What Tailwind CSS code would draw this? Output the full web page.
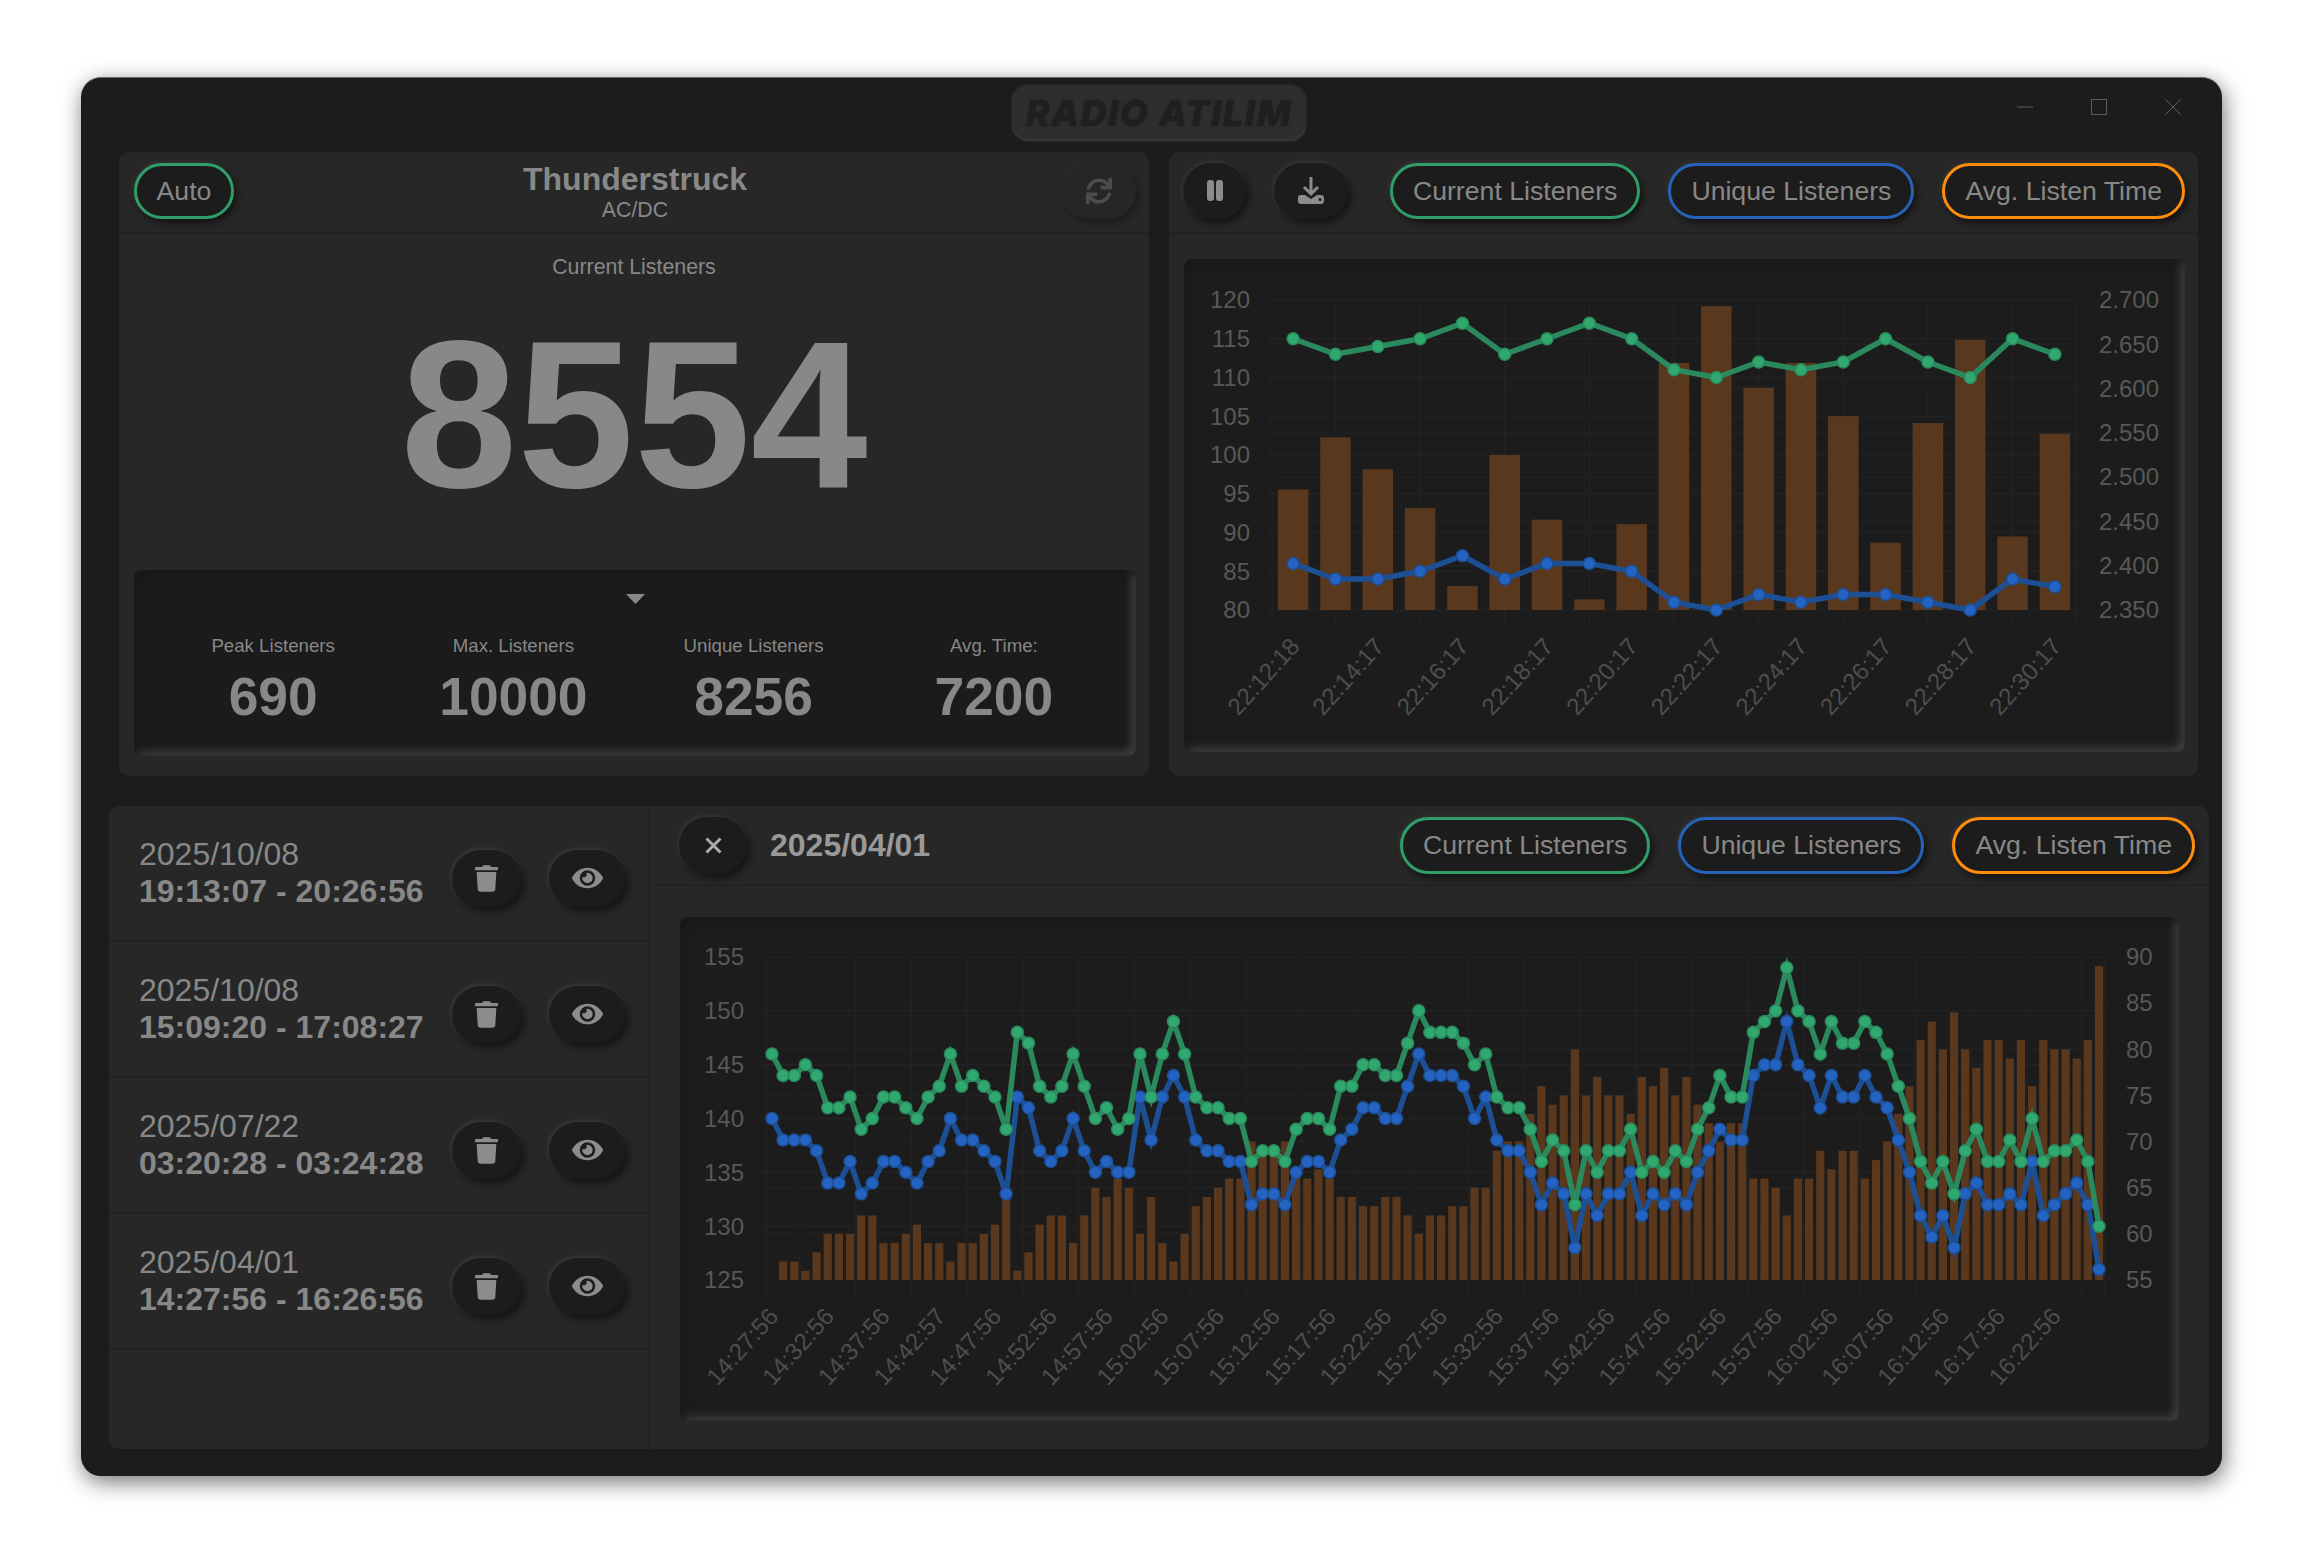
<!DOCTYPE html>
<html lang="en">
<head>
  <meta charset="UTF-8" />
  <title>Radio Atilim</title>
  <script src="https://cdn.jsdelivr.net/npm/@tailwindcss/browser@4"></script>
</head>
<body class="bg-white h-screen overflow-hidden text-[#888] [font-family:'Liberation_Sans',Arial,sans-serif]">
  <!-- Window -->
  <div class="ml-[81px] mt-[77px] w-[2141px] h-[1399px] flex flex-col bg-[#1c1c1c] rounded-[20px] border-t border-[#666] shadow-[2px_6px_22px_rgba(0,0,0,0.55)]">

    <!-- Title bar -->
    <div class="h-[74px] shrink-0 flex items-start pl-[931px] pr-[41px]">
      <div class="w-[294px] h-[56px] mt-[7px] flex items-center justify-center rounded-[16px] bg-[#2e2e2e] text-[#1f1f1f] text-[36px] font-extrabold italic tracking-[1.6px] [font-family:Inter,sans-serif] [text-shadow:0_0_2px_#1f1f1f] shadow-[inset_0_-2px_3px_#383838,0_0_3px_#333]">RADIO ATILIM</div>
      <div class="ml-auto mt-[21px] flex items-center gap-[58px] text-[#5c5c5c]">
        <svg width="16" height="16" viewBox="0 0 16 16"><path d="M0 8h16" stroke="currentColor" stroke-width="1"/></svg>
        <svg width="16" height="16" viewBox="0 0 16 16"><rect x="0.5" y="0.5" width="15" height="15" fill="none" stroke="currentColor"/></svg>
        <svg width="16" height="16" viewBox="0 0 16 16"><path d="M0 0l16 16M16 0L0 16" stroke="currentColor"/></svg>
      </div>
    </div>

    <!-- Live row -->
    <div class="h-[624px] shrink-0 flex gap-[20px] pl-[38px] pr-[24px]">
      <!-- Now playing -->
      <section class="w-[1030px] flex flex-col bg-[#272727] rounded-[10px]">
        <div class="h-[82px] shrink-0 grid grid-cols-[1fr_auto_1fr] items-center pl-[15px] pr-[13px] pb-[3px] border-b-2 border-[#222]">
          <button class="justify-self-start w-[100px] h-[56px] rounded-full bg-[#1c1c1c] border-[3px] border-[#2f9e68] text-[26.67px] shadow-[3px_4px_7px_rgba(0,0,0,0.55),-1px_-1px_4px_rgba(255,255,255,0.08)]">Auto</button>
          <div class="text-center mt-[1px]">
            <div class="text-[32px] leading-[37px] font-bold">Thunderstruck</div>
            <div class="text-[21.33px] leading-[24px]">AC/DC</div>
          </div>
          <button class="justify-self-end w-[75px] h-[56px] rounded-full bg-[#262626] flex items-center justify-center shadow-[3px_4px_7px_rgba(0,0,0,0.3),-1px_-1px_4px_rgba(255,255,255,0.03)]">
            <svg width="26" height="26" viewBox="0 0 512 512" fill="#4c4c4c"><path d="M440.65 12.57l4 82.77A247.16 247.16 0 0 0 255.83 8C134.73 8 33.91 94.92 12.29 209.82A12 12 0 0 0 24.09 224h49.05a12 12 0 0 0 11.67-9.26 175.91 175.91 0 0 1 317-56.94l-101.46-4.86a12 12 0 0 0-12.57 12v47.41a12 12 0 0 0 12 12H500a12 12 0 0 0 12-12V12a12 12 0 0 0-12-12h-47.37a12 12 0 0 0-11.98 12.57zM255.83 432a175.61 175.61 0 0 1-146-77.8l101.8 4.87a12 12 0 0 0 12.57-12v-47.4a12 12 0 0 0-12-12H12a12 12 0 0 0-12 12V500a12 12 0 0 0 12 12h47.35a12 12 0 0 0 12-12.6l-4.15-82.57A247.17 247.17 0 0 0 255.83 504c121.11 0 221.93-86.92 243.55-201.82a12 12 0 0 0-11.8-14.18h-49.05a12 12 0 0 0-11.67 9.26A175.86 175.86 0 0 1 255.83 432z"/></svg>
          </button>
        </div>
        <div class="pt-[21px] text-center text-[21.33px] leading-[25px]">Current Listeners</div>
        <div class="h-[240px] mt-[15px] flex items-center justify-center text-[210px] leading-none font-bold">8554</div>
        <div class="mt-[35px] ml-[15px] mr-[13px] h-[186px] flex flex-col bg-[#1b1b1b] rounded-[8px] shadow-[inset_3px_3px_8px_#161616,inset_-4px_-4px_8px_#454545]">
          <svg class="mx-auto mt-[24px]" width="19" height="10" viewBox="0 0 19 10"><path d="M0 0h19L9.5 10z" fill="#888"/></svg>
          <div class="mt-[31px] pl-[19px] pr-[22px] grid grid-cols-4 text-center">
            <div><div class="text-[18.67px] leading-[22px]">Peak Listeners</div><div class="mt-[10px] text-[53.33px] leading-[60px] font-bold">690</div></div>
            <div><div class="text-[18.67px] leading-[22px]">Max. Listeners</div><div class="mt-[10px] text-[53.33px] leading-[60px] font-bold">10000</div></div>
            <div><div class="text-[18.67px] leading-[22px]">Unique Listeners</div><div class="mt-[10px] text-[53.33px] leading-[60px] font-bold">8256</div></div>
            <div><div class="text-[18.67px] leading-[22px]">Avg. Time:</div><div class="mt-[10px] text-[53.33px] leading-[60px] font-bold">7200</div></div>
          </div>
        </div>
      </section>

      <!-- Live chart -->
      <section class="flex-1 flex flex-col bg-[#272727] rounded-[10px]">
        <div class="h-[82px] shrink-0 flex items-center pl-[14px] pr-[13px] pb-[3px] border-b-2 border-[#222]">
          <button class="w-[63px] h-[56px] rounded-full bg-[#1c1c1c] flex items-center justify-center gap-[2px] shadow-[3px_4px_7px_rgba(0,0,0,0.55),-1px_-1px_5px_rgba(255,255,255,0.1)]">
            <span class="w-[7px] h-[21px] rounded-[3px] bg-[#8c8c8c]"></span><span class="w-[7px] h-[21px] rounded-[3px] bg-[#8c8c8c]"></span>
          </button>
          <button class="ml-[28px] w-[74px] h-[56px] rounded-full bg-[#1c1c1c] flex items-center justify-center shadow-[3px_4px_7px_rgba(0,0,0,0.55),-1px_-1px_5px_rgba(255,255,255,0.1)]">
            <svg width="26" height="27" viewBox="0 0 26 27"><path d="M13 0v16M6 10l7 7 7-7" fill="none" stroke="#8c8c8c" stroke-width="3"/><path d="M3 18h4l6 4 6-4h4a3 3 0 0 1 3 3v3a3 3 0 0 1-3 3H3a3 3 0 0 1-3-3v-3a3 3 0 0 1 3-3z" fill="#8c8c8c"/><circle cx="22" cy="22.5" r="1.5" fill="#1c1c1c"/></svg>
          </button>
          <div class="ml-auto flex gap-[28px]">
            <button class="h-[56px] px-[20px] rounded-full bg-[#1c1c1c] border-[3px] border-[#2f9e68] text-[26.67px] shadow-[3px_4px_7px_rgba(0,0,0,0.55),-1px_-1px_4px_rgba(255,255,255,0.08)]">Current Listeners</button>
            <button class="h-[56px] px-[20px] rounded-full bg-[#1c1c1c] border-[3px] border-[#2563b8] text-[26.67px] shadow-[3px_4px_7px_rgba(0,0,0,0.55),-1px_-1px_4px_rgba(255,255,255,0.08)]">Unique Listeners</button>
            <button class="h-[56px] px-[20px] rounded-full bg-[#1c1c1c] border-[3px] border-[#ff8c0a] text-[26.67px] shadow-[3px_4px_7px_rgba(0,0,0,0.55),-1px_-1px_4px_rgba(255,255,255,0.08)]">Avg. Listen Time</button>
          </div>
        </div>
        <div class="mt-[25px] ml-[15px] mr-[13px] h-[493px] bg-[#1c1c1c] rounded-[8px] shadow-[inset_3px_3px_8px_#161616,inset_-4px_-4px_8px_#454545]">
          <svg id="liveChart" class="block" width="1000" height="491" viewBox="1184 259 1000 491"></svg>
        </div>
      </section>
    </div>

    <!-- History row -->
    <div class="mt-[30px] h-[643px] shrink-0 ml-[28px] mr-[13px] flex bg-[#272727] rounded-[10px]">
      <div id="sessions" class="w-[541px] shrink-0 border-r-2 border-[#222]">
        <div class="h-[136px] flex items-center pl-[30px] pr-[23px] border-b-2 border-[#222]">
          <div class="flex-1 text-[32px] leading-[37px]"><div>2025/10/08</div><div class="font-bold">19:13:07 - 20:26:56</div></div>
          <button class="mt-[10px] w-[69px] h-[57px] rounded-full bg-[#1c1c1c] flex items-center justify-center shadow-[3px_4px_7px_rgba(0,0,0,0.55),-1px_-1px_5px_rgba(255,255,255,0.12)]">
            <svg width="23" height="27" viewBox="0 0 448 512" fill="#8c8c8c"><path d="M432 32H312l-9.4-18.7A24 24 0 0 0 281.1 0H166.8a23.72 23.72 0 0 0-21.4 13.3L136 32H16A16 16 0 0 0 0 48v32a16 16 0 0 0 16 16h416a16 16 0 0 0 16-16V48a16 16 0 0 0-16-16zM53.2 467a48 48 0 0 0 47.9 45h245.8a48 48 0 0 0 47.9-45L416 128H32z"/></svg>
          </button>
          <button class="mt-[10px] ml-[28px] w-[76px] h-[57px] rounded-full bg-[#1c1c1c] flex items-center justify-center shadow-[3px_4px_7px_rgba(0,0,0,0.55),-1px_-1px_5px_rgba(255,255,255,0.12)]">
            <svg width="31" height="28" viewBox="0 0 576 512" fill="#8c8c8c"><path d="M572.52 241.4C518.29 135.59 410.93 64 288 64S57.68 135.64 3.48 241.41a32.35 32.35 0 0 0 0 29.19C57.71 376.41 165.07 448 288 448s230.32-71.64 284.52-177.41a32.35 32.35 0 0 0 0-29.19zM288 400a144 144 0 1 1 144-144 143.93 143.93 0 0 1-144 144zm0-240a95.31 95.31 0 0 0-25.31 3.79 47.85 47.85 0 0 1-66.9 66.9A95.78 95.78 0 1 0 288 160z"/></svg>
          </button>
        </div>
        <div class="h-[136px] flex items-center pl-[30px] pr-[23px] border-b-2 border-[#222]">
          <div class="flex-1 text-[32px] leading-[37px]"><div>2025/10/08</div><div class="font-bold">15:09:20 - 17:08:27</div></div>
          <button class="mt-[10px] w-[69px] h-[57px] rounded-full bg-[#1c1c1c] flex items-center justify-center shadow-[3px_4px_7px_rgba(0,0,0,0.55),-1px_-1px_5px_rgba(255,255,255,0.12)]">
            <svg width="23" height="27" viewBox="0 0 448 512" fill="#8c8c8c"><path d="M432 32H312l-9.4-18.7A24 24 0 0 0 281.1 0H166.8a23.72 23.72 0 0 0-21.4 13.3L136 32H16A16 16 0 0 0 0 48v32a16 16 0 0 0 16 16h416a16 16 0 0 0 16-16V48a16 16 0 0 0-16-16zM53.2 467a48 48 0 0 0 47.9 45h245.8a48 48 0 0 0 47.9-45L416 128H32z"/></svg>
          </button>
          <button class="mt-[10px] ml-[28px] w-[76px] h-[57px] rounded-full bg-[#1c1c1c] flex items-center justify-center shadow-[3px_4px_7px_rgba(0,0,0,0.55),-1px_-1px_5px_rgba(255,255,255,0.12)]">
            <svg width="31" height="28" viewBox="0 0 576 512" fill="#8c8c8c"><path d="M572.52 241.4C518.29 135.59 410.93 64 288 64S57.68 135.64 3.48 241.41a32.35 32.35 0 0 0 0 29.19C57.71 376.41 165.07 448 288 448s230.32-71.64 284.52-177.41a32.35 32.35 0 0 0 0-29.19zM288 400a144 144 0 1 1 144-144 143.93 143.93 0 0 1-144 144zm0-240a95.31 95.31 0 0 0-25.31 3.79 47.85 47.85 0 0 1-66.9 66.9A95.78 95.78 0 1 0 288 160z"/></svg>
          </button>
        </div>
        <div class="h-[136px] flex items-center pl-[30px] pr-[23px] border-b-2 border-[#222]">
          <div class="flex-1 text-[32px] leading-[37px]"><div>2025/07/22</div><div class="font-bold">03:20:28 - 03:24:28</div></div>
          <button class="mt-[10px] w-[69px] h-[57px] rounded-full bg-[#1c1c1c] flex items-center justify-center shadow-[3px_4px_7px_rgba(0,0,0,0.55),-1px_-1px_5px_rgba(255,255,255,0.12)]">
            <svg width="23" height="27" viewBox="0 0 448 512" fill="#8c8c8c"><path d="M432 32H312l-9.4-18.7A24 24 0 0 0 281.1 0H166.8a23.72 23.72 0 0 0-21.4 13.3L136 32H16A16 16 0 0 0 0 48v32a16 16 0 0 0 16 16h416a16 16 0 0 0 16-16V48a16 16 0 0 0-16-16zM53.2 467a48 48 0 0 0 47.9 45h245.8a48 48 0 0 0 47.9-45L416 128H32z"/></svg>
          </button>
          <button class="mt-[10px] ml-[28px] w-[76px] h-[57px] rounded-full bg-[#1c1c1c] flex items-center justify-center shadow-[3px_4px_7px_rgba(0,0,0,0.55),-1px_-1px_5px_rgba(255,255,255,0.12)]">
            <svg width="31" height="28" viewBox="0 0 576 512" fill="#8c8c8c"><path d="M572.52 241.4C518.29 135.59 410.93 64 288 64S57.68 135.64 3.48 241.41a32.35 32.35 0 0 0 0 29.19C57.71 376.41 165.07 448 288 448s230.32-71.64 284.52-177.41a32.35 32.35 0 0 0 0-29.19zM288 400a144 144 0 1 1 144-144 143.93 143.93 0 0 1-144 144zm0-240a95.31 95.31 0 0 0-25.31 3.79 47.85 47.85 0 0 1-66.9 66.9A95.78 95.78 0 1 0 288 160z"/></svg>
          </button>
        </div>
        <div class="h-[136px] flex items-center pl-[30px] pr-[23px] border-b-2 border-[#222]">
          <div class="flex-1 text-[32px] leading-[37px]"><div>2025/04/01</div><div class="font-bold">14:27:56 - 16:26:56</div></div>
          <button class="mt-[10px] w-[69px] h-[57px] rounded-full bg-[#1c1c1c] flex items-center justify-center shadow-[3px_4px_7px_rgba(0,0,0,0.55),-1px_-1px_5px_rgba(255,255,255,0.12)]">
            <svg width="23" height="27" viewBox="0 0 448 512" fill="#8c8c8c"><path d="M432 32H312l-9.4-18.7A24 24 0 0 0 281.1 0H166.8a23.72 23.72 0 0 0-21.4 13.3L136 32H16A16 16 0 0 0 0 48v32a16 16 0 0 0 16 16h416a16 16 0 0 0 16-16V48a16 16 0 0 0-16-16zM53.2 467a48 48 0 0 0 47.9 45h245.8a48 48 0 0 0 47.9-45L416 128H32z"/></svg>
          </button>
          <button class="mt-[10px] ml-[28px] w-[76px] h-[57px] rounded-full bg-[#1c1c1c] flex items-center justify-center shadow-[3px_4px_7px_rgba(0,0,0,0.55),-1px_-1px_5px_rgba(255,255,255,0.12)]">
            <svg width="31" height="28" viewBox="0 0 576 512" fill="#8c8c8c"><path d="M572.52 241.4C518.29 135.59 410.93 64 288 64S57.68 135.64 3.48 241.41a32.35 32.35 0 0 0 0 29.19C57.71 376.41 165.07 448 288 448s230.32-71.64 284.52-177.41a32.35 32.35 0 0 0 0-29.19zM288 400a144 144 0 1 1 144-144 143.93 143.93 0 0 1-144 144zm0-240a95.31 95.31 0 0 0-25.31 3.79 47.85 47.85 0 0 1-66.9 66.9A95.78 95.78 0 1 0 288 160z"/></svg>
          </button>
        </div>
      </div>

      <div class="flex-1 flex flex-col">
        <div class="h-[80px] shrink-0 flex items-center pl-[29px] pr-[14px] border-b-2 border-[#222]">
          <button class="w-[68px] h-[57px] rounded-full bg-[#1c1c1c] flex items-center justify-center shadow-[3px_4px_7px_rgba(0,0,0,0.55),-1px_-1px_5px_rgba(255,255,255,0.1)]">
            <svg width="17" height="17" viewBox="0 0 17 17"><path d="M1.5 1.5l14 14M15.5 1.5l-14 14" stroke="#aaa" stroke-width="3"/></svg>
          </button>
          <div class="ml-[23px] text-[32px] font-bold text-[#999]">2025/04/01</div>
          <div class="ml-auto flex gap-[28px]">
            <button class="h-[57px] px-[20px] rounded-full bg-[#1c1c1c] border-[3px] border-[#2f9e68] text-[26.67px] shadow-[3px_4px_7px_rgba(0,0,0,0.55),-1px_-1px_4px_rgba(255,255,255,0.08)]">Current Listeners</button>
            <button class="h-[57px] px-[20px] rounded-full bg-[#1c1c1c] border-[3px] border-[#2563b8] text-[26.67px] shadow-[3px_4px_7px_rgba(0,0,0,0.55),-1px_-1px_4px_rgba(255,255,255,0.08)]">Unique Listeners</button>
            <button class="h-[57px] px-[20px] rounded-full bg-[#1c1c1c] border-[3px] border-[#ff8c0a] text-[26.67px] shadow-[3px_4px_7px_rgba(0,0,0,0.55),-1px_-1px_4px_rgba(255,255,255,0.08)]">Avg. Listen Time</button>
          </div>
        </div>
        <div class="mt-[31px] ml-[30px] w-[1499px] h-[504px] bg-[#1c1c1c] rounded-[8px] shadow-[inset_3px_3px_8px_#161616,inset_-4px_-4px_8px_#454545]">
          <svg id="historyChart" class="block" width="1499" height="503" viewBox="680 917 1499 503"></svg>
        </div>
      </div>
    </div>
  </div>

  <script>
    // plain svg charts, same look as the chart.js ones in the app
    function drawChart(id, c) {
      const svg = document.getElementById(id);
      const n = c.green.length;
      const step = (c.right - c.left) / n;
      const px = i => c.left + step * (i + 0.5);
      const yL = v => c.bottom - (v - c.lMin) / (c.lMax - c.lMin) * (c.bottom - c.top);
      const yR = v => c.bottom - (v - c.rMin) / (c.rMax - c.rMin) * (c.bottom - c.top);
      let out = '';

      // grid
      for (let v = c.lMin; v <= c.lMax; v += c.lStep) {
        out += `<line x1="${c.left - 6}" x2="${c.right}" y1="${yL(v)}" y2="${yL(v)}" stroke="#222" stroke-width="1.5"/>`;
      }
      for (let v = c.rMin; v <= c.rMax; v += c.rStep) {
        out += `<line x1="${c.left}" x2="${c.right + 6}" y1="${yR(v)}" y2="${yR(v)}" stroke="#212121" stroke-width="1.5"/>`;
      }
      const gridX = [c.left, c.right];
      for (let i = c.every / 2; i < n; i += c.every) gridX.push(px(i));
      gridX.forEach(x => {
        out += `<line x1="${x}" x2="${x}" y1="${c.top}" y2="${c.bottom + 16}" stroke="#222" stroke-width="1.5"/>`;
      });

      // bars
      c.bars.forEach((v, i) => {
        if (v <= c.rMin) return;
        out += `<rect x="${px(i) - c.barW / 2}" y="${yR(v)}" width="${c.barW}" height="${c.bottom - yR(v)}" fill="#5a381d"/>`;
      });

      // lines
      [[c.blue, '#1d4f94', '#2563c2'], [c.green, '#2a8a5e', '#30a86e']].forEach(([vals, line, dot]) => {
        const pts = vals.map((v, i) => px(i) + ',' + yL(v)).join(' ');
        out += `<polyline points="${pts}" fill="none" stroke="${line}" stroke-width="5.5"/>`;
        vals.forEach((v, i) => { out += `<circle cx="${px(i)}" cy="${yL(v)}" r="6" fill="${dot}" stroke="${line}" stroke-width="1.5"/>`; });
      });

      // axis labels
      for (let v = c.lMin; v <= c.lMax; v += c.lStep) {
        out += `<text x="${c.lLabel}" y="${yL(v) + 2}" text-anchor="end" dominant-baseline="middle" font-size="24" fill="#585858">${v}</text>`;
      }
      for (let v = c.rMin; v <= c.rMax; v += c.rStep) {
        const txt = c.rFormat ? c.rFormat(v) : v;
        out += `<text x="${c.rLabel}" y="${yR(v) + 2}" dominant-baseline="middle" font-size="24" fill="#585858">${txt}</text>`;
      }
      c.times.forEach((t, k) => {
        const x = px(k * c.every) + 3, y = c.bottom + 33;
        out += `<text transform="translate(${x} ${y}) rotate(-48)" text-anchor="end" dominant-baseline="middle" font-size="24" fill="#4e4e4e">${t}</text>`;
      });
      svg.innerHTML = out;
    }

    drawChart('liveChart', {
      left: 1272, right: 2076, top: 300, bottom: 610, every: 2, barW: 30.5,
      lMin: 80, lMax: 120, lStep: 5, lLabel: 1250,
      rMin: 2350, rMax: 2700, rStep: 50, rLabel: 2099,
      rFormat: v => String(v).replace(/(\d)(\d{3})/, '$1.$2'),
      green: [115,113,114,115,117,113,115,117,115,111,110,112,111,112,115,112,110,115,113],
      blue: [86,84,84,85,87,84,86,86,85,81,80,82,81,82,82,81,80,84,83],
      bars: [2486,2545,2509,2465,2377,2525,2452,2362,2447,2629,2693,2601,2629,2569,2426,2561,2655,2433,2549],
      times: ['22:12:18','22:14:17','22:16:17','22:18:17','22:20:17','22:22:17','22:24:17','22:26:17','22:28:17','22:30:17']
    });

    drawChart('historyChart', {
      left: 766.4, right: 2104.6, top: 957, bottom: 1280, every: 5, barW: 8.2,
      lMin: 125, lMax: 155, lStep: 5, lLabel: 744,
      rMin: 55, rMax: 90, rStep: 5, rLabel: 2126,
      green: [146,144,144,145,144,141,141,142,139,140,142,142,141,140,142,143,146,143,144,143,142,139,148,147,143,142,143,146,143,140,141,139,140,146,142,146,149,146,142,141,141,140,140,136,137,137,136,139,140,140,139,143,143,145,145,144,144,147,150,148,148,148,147,145,146,142,141,141,139,136,138,137,132,137,135,137,137,139,135,136,135,137,136,139,141,144,142,142,148,149,150,154,150,149,146,149,147,147,149,148,146,143,140,136,134,136,133,137,139,136,136,138,136,140,136,137,137,138,136,130],
      blue: [140,138,138,138,137,134,134,136,133,134,136,136,135,134,136,137,140,138,138,137,136,133,142,141,137,136,137,140,137,135,136,135,135,142,138,142,144,142,138,137,137,136,136,132,133,133,132,135,136,136,135,138,139,141,141,140,140,143,146,144,144,144,143,140,142,138,137,137,135,132,134,133,128,133,131,133,133,135,131,133,132,133,132,135,137,139,138,138,144,145,145,149,145,144,141,144,142,142,144,142,141,138,135,131,129,131,128,133,134,132,132,133,132,136,131,132,133,134,132,126],
      bars: [55,57,57,56,58,60,60,60,62,62,59,59,60,61,59,59,57,59,59,60,61,64,56,58,61,62,62,59,62,65,64,66,65,60,64,59,57,60,63,64,65,66,66,70,69,69,70,67,66,67,66,64,64,63,63,64,64,62,60,62,62,63,63,65,65,69,70,70,73,76,74,75,80,75,77,75,75,73,77,76,78,75,77,74,72,70,72,72,66,66,65,62,66,66,69,67,69,69,66,68,70,73,76,81,83,80,84,80,78,81,81,79,81,76,81,80,80,79,81,89],
      times: ['14:27:56','14:32:56','14:37:56','14:42:57','14:47:56','14:52:56','14:57:56','15:02:56','15:07:56','15:12:56','15:17:56','15:22:56','15:27:56','15:32:56','15:37:56','15:42:56','15:47:56','15:52:56','15:57:56','16:02:56','16:07:56','16:12:56','16:17:56','16:22:56']
    });
  </script>
</body>
</html>
